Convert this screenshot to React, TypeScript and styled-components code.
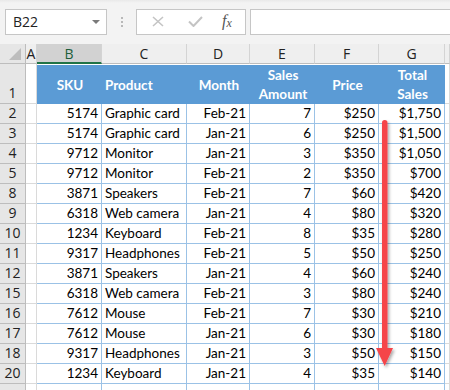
import styled, { createGlobalStyle } from 'styled-components';
import React from 'react';

type Row = {
  num: number;
  sku: number;
  product: string;
  month: string;
  amount: number;
  price: string;
  total: string;
};

const rows: Row[] = [
  { num: 2, sku: 5174, product: 'Graphic card', month: 'Feb-21', amount: 7, price: '$250', total: '$1,750' },
  { num: 3, sku: 5174, product: 'Graphic card', month: 'Jan-21', amount: 6, price: '$250', total: '$1,500' },
  { num: 4, sku: 9712, product: 'Monitor', month: 'Jan-21', amount: 3, price: '$350', total: '$1,050' },
  { num: 5, sku: 9712, product: 'Monitor', month: 'Feb-21', amount: 2, price: '$350', total: '$700' },
  { num: 8, sku: 3871, product: 'Speakers', month: 'Feb-21', amount: 7, price: '$60', total: '$420' },
  { num: 9, sku: 6318, product: 'Web camera', month: 'Jan-21', amount: 4, price: '$80', total: '$320' },
  { num: 10, sku: 1234, product: 'Keyboard', month: 'Feb-21', amount: 8, price: '$35', total: '$280' },
  { num: 11, sku: 9317, product: 'Headphones', month: 'Feb-21', amount: 5, price: '$50', total: '$250' },
  { num: 12, sku: 3871, product: 'Speakers', month: 'Jan-21', amount: 4, price: '$60', total: '$240' },
  { num: 15, sku: 6318, product: 'Web camera', month: 'Feb-21', amount: 3, price: '$80', total: '$240' },
  { num: 16, sku: 7612, product: 'Mouse', month: 'Feb-21', amount: 7, price: '$30', total: '$210' },
  { num: 17, sku: 7612, product: 'Mouse', month: 'Jan-21', amount: 6, price: '$30', total: '$180' },
  { num: 18, sku: 9317, product: 'Headphones', month: 'Jan-21', amount: 3, price: '$50', total: '$150' },
  { num: 20, sku: 1234, product: 'Keyboard', month: 'Jan-21', amount: 4, price: '$35', total: '$140' },
];

const letters = ['B', 'C', 'D', 'E', 'F', 'G'];

const App = () => {
  return (
    <Window>
      <GlobalStyle />
      <FormulaBar>
        <NameBox>
          <span>B22</span>
          <DropArrow />
        </NameBox>
        <Grip>
          <i />
          <i />
          <i />
        </Grip>
        <FxBox>
          <FxIcon>
            <svg width='12' height='11' viewBox='0 0 12 11'>
              <path d='M1 1 L11 10 M11 1 L1 10' stroke='#c4c4c4' strokeWidth='1.6' fill='none' />
            </svg>
          </FxIcon>
          <FxIcon>
            <svg width='15' height='11' viewBox='0 0 15 11'>
              <path d='M1 5.5 L5.5 10 L14 1' stroke='#c4c4c4' strokeWidth='2' fill='none' />
            </svg>
          </FxIcon>
          <FxLabel>
            f<sub>x</sub>
          </FxLabel>
        </FxBox>
        <FormulaInput />
      </FormulaBar>

      <Sheet>
        <Corner>
          <CornerTriangle />
        </Corner>
        <ColHead>A</ColHead>
        {letters.map((l) => (
          <ColHead key={l} $selected={l === 'B'}>
            {l}
          </ColHead>
        ))}
        <ColHead />

        <RowHead>1</RowHead>
        <EmptyCell />
        <HeadCell $align='center'>SKU</HeadCell>
        <HeadCell $align='left'>Product</HeadCell>
        <HeadCell $align='center'>Month</HeadCell>
        <HeadCell $align='center'>
          Sales
          <br />
          Amount
        </HeadCell>
        <HeadCell $align='center'>Price</HeadCell>
        <HeadCell $align='center'>
          Total
          <br />
          Sales
        </HeadCell>
        <EmptyCell />

        {rows.map((r) => (
          <React.Fragment key={r.num}>
            <RowHead>{r.num}</RowHead>
            <EmptyCell />
            <Cell $align='right'>{r.sku}</Cell>
            <Cell $align='left'>{r.product}</Cell>
            <Cell $align='right'>{r.month}</Cell>
            <Cell $align='right'>{r.amount}</Cell>
            <Cell $align='right'>{r.price}</Cell>
            <Cell $align='right'>{r.total}</Cell>
            <EmptyCell />
          </React.Fragment>
        ))}
        <RowHead />
        <EmptyCell />
        {letters.map((l) => (
          <Cell key={l} $align='left' />
        ))}
        <EmptyCell />
      </Sheet>

      <Arrow width='30' height='260' viewBox='0 0 30 260'>
        <defs>
          <filter id='shadow' x='-50%' y='-10%' width='200%' height='120%'>
            <feDropShadow dx='1.5' dy='2' stdDeviation='1.5' floodColor='#000' floodOpacity='0.35' />
          </filter>
        </defs>
        <g filter='url(#shadow)'>
          <rect x='11' y='2' width='5.5' height='232' rx='2.7' fill='#f5444a' />
          <polygon points='5,230 22,230 13.7,248' fill='#f5444a' />
        </g>
      </Arrow>
    </Window>
  );
};

export default App;

const GlobalStyle = createGlobalStyle`
  html, body {
    margin: 0;
    padding: 0;
    background: #ffffff;
  }
  * {
    box-sizing: border-box;
  }
`;

const Window = styled.div`
  position: relative;
  width: 450px;
  height: 390px;
  overflow: hidden;
  background: #ffffff;
`;

const FormulaBar = styled.div`
  display: flex;
  align-items: center;
  height: 44px;
  padding: 0 0 1px 5px;
  background: linear-gradient(#e9e9e9 0, #f3f3f3 3px, #f3f3f3 100%);
`;

const NameBox = styled.div`
  display: flex;
  align-items: center;
  justify-content: space-between;
  width: 102px;
  height: 26px;
  padding: 0 6px 0 7px;
  background: #ffffff;
  border: 1px solid #c6c6c6;
  font: 14px 'Open Sans', 'Noto Sans', sans-serif;
  color: #222222;
`;

const DropArrow = styled.div`
  width: 0;
  height: 0;
  border-left: 4px solid transparent;
  border-right: 4px solid transparent;
  border-top: 4px solid #7a7a7a;
`;

const Grip = styled.div`
  display: flex;
  flex-direction: column;
  gap: 2px;
  margin: 0 13px 0 14px;

  i {
    display: block;
    width: 2px;
    height: 2px;
    background: #b8b8b8;
  }
`;

const FxBox = styled.div`
  display: flex;
  align-items: center;
  width: 110px;
  height: 26px;
  padding-left: 15px;
  background: #ffffff;
  border: 1px solid #c6c6c6;
`;

const FxIcon = styled.span`
  display: flex;
  width: 36px;
`;

const FxLabel = styled.span`
  font: italic 16px 'Liberation Serif', 'DejaVu Serif', serif;
  color: #555555;
  margin-left: -2px;

  sub {
    font-size: 12px;
    vertical-align: -1px;
  }
`;

const FormulaInput = styled.div`
  flex: 1;
  height: 26px;
  margin-left: 4px;
  background: #ffffff;
  border: 1px solid #c6c6c6;
  border-right: none;
`;

const Sheet = styled.div`
  display: grid;
  grid-template-columns: 26px 11px 65px 85px 63px 65px 64px 66px 1fr;
  grid-template-rows: 20px 40px repeat(15, 20px);
  font: 13.5px Lato, 'Liberation Sans', sans-serif;
  color: #000000;
`;

const Corner = styled.div`
  position: relative;
  background: #e6e6e6;
  border-right: 1px solid #bdbdbd;
  border-bottom: 1px solid #bdbdbd;
`;

const CornerTriangle = styled.div`
  position: absolute;
  right: 4px;
  bottom: 3px;
  width: 0;
  height: 0;
  border-left: 12px solid transparent;
  border-bottom: 12px solid #bdbdbd;
`;

const ColHead = styled.div<{ $selected?: boolean }>`
  display: flex;
  align-items: center;
  justify-content: center;
  background: ${({ $selected }) => ($selected ? '#d2d2d2' : '#efefef')};
  border-right: 1px solid #d4d4d4;
  border-bottom: ${({ $selected }) => ($selected ? '2px solid #217346' : '1px solid #bdbdbd')};
  font: 14px 'Open Sans', 'Noto Sans', sans-serif;
  color: ${({ $selected }) => ($selected ? '#1e5e3a' : '#222222')};
`;

const RowHead = styled.div`
  display: flex;
  align-items: flex-end;
  justify-content: center;
  padding-bottom: 1px;
  background: #e6e6e6;
  border-right: 1px solid #bdbdbd;
  border-bottom: 1px solid #bdbdbd;
  font: 14px 'Open Sans', 'Noto Sans', sans-serif;
  color: #222222;
  line-height: 18px;
`;

const EmptyCell = styled.div`
  background: #ffffff;
  border-right: 1px solid #dadada;
  border-bottom: 1px solid #dadada;
`;

const HeadCell = styled.div<{ $align: 'left' | 'center' }>`
  display: flex;
  flex-direction: column;
  justify-content: center;
  align-items: ${({ $align }) => ($align === 'left' ? 'flex-start' : 'center')};
  padding: 1px 2px 0 3px;
  background: #5b9bd5;
  border-top: 1px solid #ffffff;
  font-weight: 700;
  color: #ffffff;
  line-height: 19px;
  text-align: center;
`;

const Cell = styled.div<{ $align: 'left' | 'right' }>`
  display: flex;
  align-items: flex-end;
  justify-content: ${({ $align }) => ($align === 'left' ? 'flex-start' : 'flex-end')};
  padding: 0 3px 1px 3px;
  border-right: 1px solid #9bc2e6;
  border-bottom: 1px solid #9bc2e6;
  line-height: 18px;
  white-space: nowrap;
`;

const Arrow = styled.svg`
  position: absolute;
  left: 371px;
  top: 118px;
  pointer-events: none;
`;
